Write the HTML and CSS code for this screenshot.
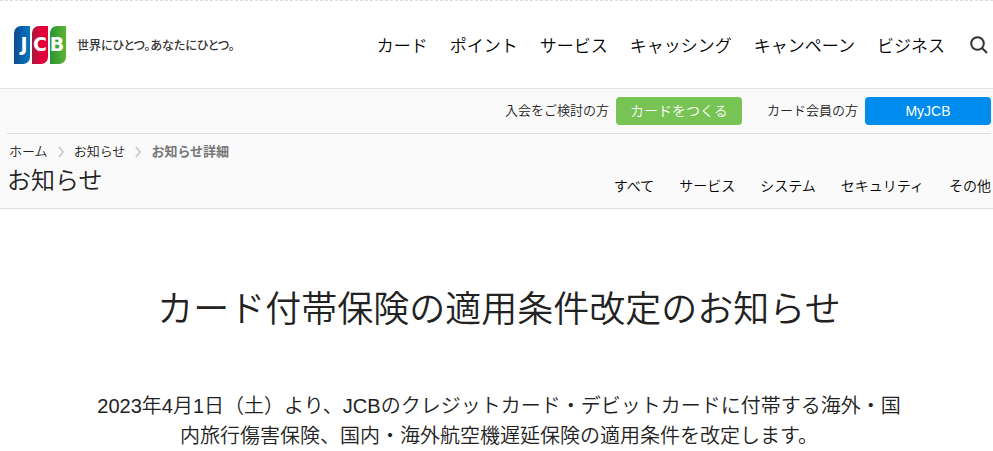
FILE: index.html
```html
<!DOCTYPE html>
<html lang="ja">
<head>
    <meta charset="UTF-8">
    <meta name="viewport" content="width=device-width, initial-scale=1.0">
    <title>カード付帯保険の適用条件改定のお知らせ</title>
    <link rel="stylesheet" href="styles.css">
</head>
<body>
    <header class="header">
        <a href="#" class="brand">
            <svg class="logo" viewBox="0 0 52 38" role="img" aria-label="JCB">
                <defs>
                    <linearGradient id="blue"><stop offset="0" stop-color="#124a91"/><stop offset="1" stop-color="#0076c2"/></linearGradient>
                    <linearGradient id="red"><stop offset="0" stop-color="#a5183a"/><stop offset=".6" stop-color="#e4003a"/></linearGradient>
                    <linearGradient id="green"><stop offset="0" stop-color="#2b9437"/><stop offset="1" stop-color="#5cb531"/></linearGradient>
                </defs>
                <path fill="url(#blue)" d="M0 38V7a7 7 0 0 1 7-7h9v31a7 7 0 0 1-7 7z"/>
                <path fill="url(#red)" d="M18 38V7a7 7 0 0 1 7-7h9v31a7 7 0 0 1-7 7z"/>
                <path fill="url(#green)" d="M36 38V7a7 7 0 0 1 7-7h9v31a7 7 0 0 1-7 7z"/>
                <g class="logo-text">
                    <text x="10" y="25">J</text>
                    <text x="26" y="25">C</text>
                    <text x="43" y="25">B</text>
                </g>
            </svg>
            <span class="tagline">世界にひとつ。あなたにひとつ。</span>
        </a>
        <nav class="main-nav">
            <a href="#">カード</a>
            <a href="#">ポイント</a>
            <a href="#">サービス</a>
            <a href="#">キャッシング</a>
            <a href="#">キャンペーン</a>
            <a href="#">ビジネス</a>
            <button type="button" class="search-button" aria-label="検索">
                <svg viewBox="0 0 18 18">
                    <circle cx="7.5" cy="7.5" r="6.3"></circle>
                    <path d="M12 12l5 5"></path>
                </svg>
            </button>
        </nav>
    </header>

    <div class="sub-header">
        <div class="account">
            <span class="account-label">入会をご検討の方</span>
            <a href="#" class="button button-green">カードをつくる</a>
            <span class="account-label">カード会員の方</span>
            <a href="#" class="button button-blue">MyJCB</a>
        </div>
        <nav class="breadcrumb">
            <a href="#">ホーム</a>
            <svg viewBox="0 0 6 12"><path d="M1 1l4 5-4 5"></path></svg>
            <a href="#">お知らせ</a>
            <svg viewBox="0 0 6 12"><path d="M1 1l4 5-4 5"></path></svg>
            <span class="current">お知らせ詳細</span>
        </nav>
        <div class="category">
            <p class="category-title">お知らせ</p>
            <nav class="category-nav">
                <a href="#">すべて</a>
                <a href="#">サービス</a>
                <a href="#">システム</a>
                <a href="#">セキュリティ</a>
                <a href="#">その他</a>
            </nav>
        </div>
    </div>

    <main class="content">
        <h1>カード付帯保険の適用条件改定のお知らせ</h1>
        <p class="lead">2023年4月1日（土）より、JCBのクレジットカード・デビットカードに付帯する海外・国内旅行傷害保険、国内・海外航空機遅延保険の適用条件を改定します。</p>
    </main>
</body>
</html>
```

FILE: styles.css
```css
* {
    box-sizing: border-box;
}

body {
    margin: 0;
    border-top: 1px dashed #ddd;
    background-color: #fff;
    color: #222;
    font-family: "Liberation Sans", "Noto Sans CJK JP", sans-serif;
    font-weight: 350;
}

a {
    color: inherit;
    text-decoration: none;
}

.header {
    display: flex;
    justify-content: space-between;
    align-items: center;
    height: 88px;
    padding: 0 5px 0 14px;
    border-bottom: 1px solid #e5e5e5;
}

.brand {
    display: flex;
    align-items: center;
    gap: 11px;
}

.logo {
    width: 52px;
    height: 38px;
}

.logo-text {
    fill: #fff;
    font-family: "DejaVu Sans", sans-serif;
    font-size: 19px;
    font-weight: bold;
    text-anchor: middle;
}

.tagline {
    color: #333;
    font-size: 12px;
    font-weight: 500;
    font-feature-settings: "palt";
}

.main-nav {
    display: flex;
    align-items: center;
    gap: 22px;
    color: #000;
    font-size: 17px;
    white-space: nowrap;
}

.search-button {
    display: flex;
    margin-left: 3px;
    padding: 0;
    border: none;
    background: none;
    cursor: pointer;
}

.search-button svg {
    width: 18px;
    height: 18px;
    fill: none;
    stroke: #333;
    stroke-width: 2;
}

.sub-header {
    padding: 8px 2px 0 7px;
    border-bottom: 1px solid #ddd;
    background-color: #fafafa;
}

.account {
    display: flex;
    justify-content: flex-end;
    align-items: center;
    padding-bottom: 8px;
    border-bottom: 1px solid #ddd;
    font-size: 13px;
    line-height: 28px;
}

.account-label {
    margin-right: 7px;
}

.button {
    width: 126px;
    border-radius: 4px;
    color: #fff;
    font-size: 14px;
    text-align: center;
}

.button-green {
    margin-right: 25px;
    background-color: #77c353;
}

.button-blue {
    background-color: #008cee;
}

.breadcrumb {
    display: flex;
    align-items: center;
    gap: 10px;
    padding: 8px 2px 0;
    font-size: 13px;
    line-height: 20px;
}

.breadcrumb svg {
    width: 6px;
    height: 12px;
    fill: none;
    stroke: #ccc;
    stroke-width: 2;
}

.current {
    color: #777;
    font-weight: bold;
}

.category {
    display: flex;
    justify-content: space-between;
    align-items: flex-end;
    padding-bottom: 12px;
}

.category-title {
    margin: 4px 0 0;
    font-size: 24px;
    line-height: 30px;
}

.category-nav {
    display: flex;
    gap: 25px;
    color: #000;
    font-size: 14px;
    line-height: 20px;
}

.content {
    padding: 74px 2px 0 7px;
    text-align: center;
}

h1 {
    margin: 0 0 54px;
    font-size: 36px;
    font-weight: 350;
    line-height: 54px;
}

.lead {
    max-width: 820px;
    margin: 0 auto;
    font-size: 20px;
    line-height: 30px;
}
```
